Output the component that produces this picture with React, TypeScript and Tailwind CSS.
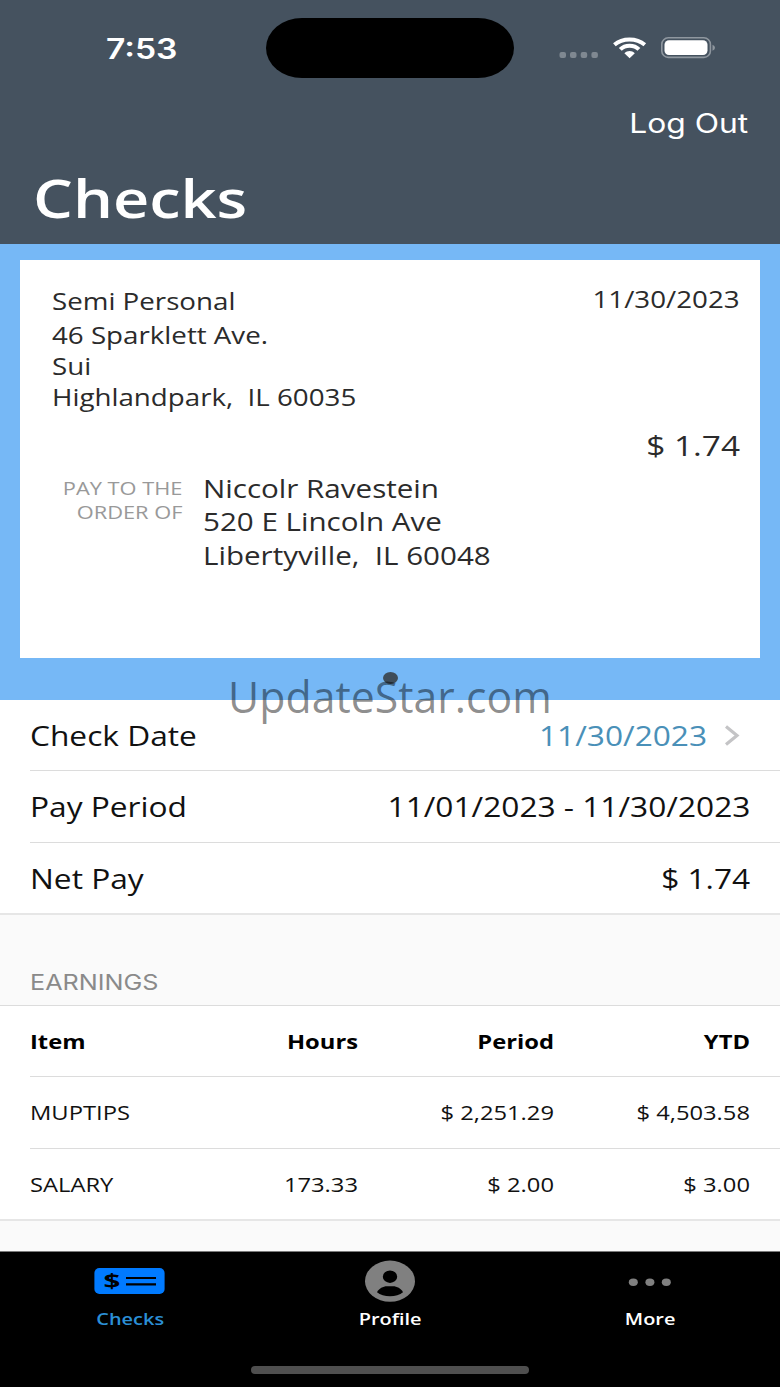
import type { ReactNode } from 'react';

type StretchProps = {
  children: ReactNode;
  className?: string;
};

// Wide lettering, used for every label on the screen.
function Left({ children, className = '' }: StretchProps) {
  return (
    <span className={`block origin-left scale-x-[1.2] whitespace-pre ${className}`}>{children}</span>
  );
}

function Right({ children, className = '' }: StretchProps) {
  return (
    <span className={`block origin-right scale-x-[1.2] whitespace-pre text-right ${className}`}>
      {children}
    </span>
  );
}

function StatusIcons() {
  return (
    <svg width="160" height="24" viewBox="558 36 160 24" className="block">
      <g fill="#7f8891">
        <rect x="559.5" y="52" width="6.5" height="6" rx="2" />
        <rect x="570" y="52" width="6.5" height="6" rx="2" />
        <rect x="580.7" y="52" width="6.5" height="6" rx="2" />
        <rect x="591.4" y="52" width="6.5" height="6" rx="2" />
      </g>
      <g fill="none" stroke="#fff" strokeWidth="4">
        <path d="M614.4 44.8C622.5 37.8 636.5 37.8 644.8 44.8" />
        <path d="M620.3 49.4C625 44.4 634.2 44.4 638.9 49.4" />
      </g>
      <path d="M624.4 53.3C627.4 50.1 631.8 50.1 634.8 53.3L629.6 58.2Z" fill="#fff" />
      <rect x="661.8" y="37.8" width="48.6" height="19.6" rx="6.5" fill="none" stroke="#8f979f" strokeWidth="1.6" />
      <rect x="664.5" y="40.3" width="43" height="14.8" rx="4.5" fill="#fff" />
      <path d="M712.5 44.8Q715 45.8 715 47.8T712.5 50.8Z" fill="#8f979f" />
    </svg>
  );
}

function Header() {
  return (
    <header className="h-[244px] bg-[#45525f] text-white">
      <div className="flex h-24 items-center">
        <div className="w-[266px] pt-[2px] pl-[106px] font-['Inter'] text-[28px] leading-none font-semibold">
          <Left>7:53</Left>
        </div>
        <div className="h-[60px] w-[248px] rounded-[36px/30px] bg-black" />
        <div className="ml-11">
          <StatusIcons />
        </div>
      </div>
      <div className="flex h-[54px] items-center justify-end pt-[2px] pr-8 font-['Inter'] text-[26.5px]">
        <Right>Log Out</Right>
      </div>
      <h1 className="flex h-24 items-center pl-[33px] text-[52.5px] font-semibold">
        <Left>Checks</Left>
      </h1>
    </header>
  );
}

function CheckCard() {
  return (
    <section className="h-[456px] bg-[#76b8f6] px-5 pt-4 text-[#2b2b2b]">
      <div className="h-[397.5px] bg-white pt-6 pr-5 pl-8">
        <div className="flex justify-between text-[23.1px]">
          <div>
            <Left className="leading-[34px]">Semi Personal</Left>
            <Left className="leading-[34px]">46 Sparklett Ave.</Left>
            <Left className="leading-[29px]">Sui</Left>
            <Left className="leading-[32px]">Highlandpark,  IL 60035</Left>
          </div>
          <Right className="leading-[30px]">11/30/2023</Right>
        </div>
        <Right className="mt-4 text-[27.8px] leading-8">$ 1.74</Right>
        <div className="mt-[11px] flex">
          <div className="w-[130.5px] pt-1 text-[18.2px] leading-6 text-[#999]">
            <Right>PAY TO THE</Right>
            <Right>ORDER OF</Right>
          </div>
          <div className="ml-5 text-[24.65px]">
            <Left className="leading-[33px]">Niccolr Ravestein</Left>
            <Left className="leading-[34px]">520 E Lincoln Ave</Left>
            <Left className="leading-[33px]">Libertyville,  IL 60048</Left>
          </div>
        </div>
      </div>
      <div className="mx-auto mt-[14.5px] h-3 w-[15px] rounded-[50%] bg-[#3f4d5a]" />
    </section>
  );
}

function Summary() {
  return (
    <section className="border-b-2 border-[#e6e6e6] bg-white pl-[30px] text-[26.4px] text-[#111]">
      <div className="flex h-[71px] items-center justify-between border-b border-[#dcdcdc] pt-[3px] pr-10">
        <Left>Check Date</Left>
        <div className="flex items-center text-[#4a90b8]">
          <Right>11/30/2023</Right>
          <svg width="16" height="22" viewBox="0 0 16 22" className="ml-[17px]">
            <path d="M2 1.5L13 10.5L2 19.5" fill="none" stroke="#c4c4c6" strokeWidth="3.2" />
          </svg>
        </div>
      </div>
      <div className="flex h-[72px] items-center justify-between border-b border-[#dcdcdc] pt-[2px] pr-[30px]">
        <Left>Pay Period</Left>
        <Right>11/01/2023 - 11/30/2023</Right>
      </div>
      <div className="flex h-[70px] items-center justify-between pt-[3px] pr-[30px]">
        <Left>Net Pay</Left>
        <Right>$ 1.74</Right>
      </div>
    </section>
  );
}

const earnings = [
  { item: 'MUPTIPS', hours: '', period: '$ 2,251.29', ytd: '$ 4,503.58' },
  { item: 'SALARY', hours: '173.33', period: '$ 2.00', ytd: '$ 3.00' },
];

const rowClass = 'grid grid-cols-[132px_196px_196px_196px] items-center';

function Earnings() {
  return (
    <section>
      <h2 className="flex h-[91px] items-end border-b border-[#dcdcdc] pb-[7px] pl-[30px] font-['Inter'] text-[21px] text-[#8a8a8a]">
        <Left>EARNINGS</Left>
      </h2>
      <div className="border-b-2 border-[#e6e6e6] bg-white pl-[30px] text-[19.8px] text-[#111]">
        <div className={`${rowClass} h-[71px] border-b border-[#dcdcdc] pt-px font-bold text-black`}>
          <Left>Item</Left>
          <Right>Hours</Right>
          <Right>Period</Right>
          <Right>YTD</Right>
        </div>
        {earnings.map((row, i) => (
          <div
            key={row.item}
            className={`${rowClass} ${i === 0 ? 'h-[72px] border-b border-[#dcdcdc]' : 'h-[70px] pt-px'}`}
          >
            <Left>{row.item}</Left>
            <Right>{row.hours}</Right>
            <Right>{row.period}</Right>
            <Right>{row.ytd}</Right>
          </div>
        ))}
      </div>
    </section>
  );
}

function TabBar() {
  return (
    <nav className="h-[136px] border-t border-[#7a7a7a] bg-black text-[16.6px] font-semibold text-white">
      <div className="grid h-[84px] grid-cols-3">
        <div className="flex flex-col items-center">
          <svg width="72" height="44" viewBox="94 1260 72 44" className="mt-2">
            <rect x="94.4" y="1268" width="70.2" height="26" rx="5" fill="#007aff" />
            <text
              transform="translate(112 1287.8) scale(1.55 1)"
              textAnchor="middle"
              fontSize="19"
              fontWeight="700"
              fill="#000"
            >
              $
            </text>
            <path d="M126 1278H156M126 1284.4H156" stroke="#000" strokeWidth="2.2" />
          </svg>
          <span className="mt-[6px] block scale-x-[1.2] leading-[18px] text-[#2b8fd6]">Checks</span>
        </div>
        <div className="flex flex-col items-center">
          <svg width="50" height="42" viewBox="365 1260 50 42" className="mt-2">
            <ellipse cx="390" cy="1281.2" rx="25" ry="20.6" fill="#808080" />
            <ellipse cx="390" cy="1276.7" rx="7.2" ry="6.2" fill="#000" />
            <path
              d="M377 1292.2C379 1288.5 383 1286.3 387 1286.3H393C397 1286.3 401 1288.5 403 1292.2C397 1297.6 383 1297.6 377 1292.2Z"
              fill="#000"
            />
          </svg>
          <span className="mt-2 block scale-x-[1.2] leading-[18px]">Profile</span>
        </div>
        <div className="flex flex-col items-center">
          <svg width="50" height="42" viewBox="625 1260 50 42" className="mt-2">
            <g fill="#808080">
              <ellipse cx="633.3" cy="1282.2" rx="4.5" ry="3.7" />
              <ellipse cx="649.9" cy="1282.2" rx="4.5" ry="3.7" />
              <ellipse cx="666.3" cy="1282.2" rx="4.5" ry="3.7" />
            </g>
          </svg>
          <span className="mt-2 block scale-x-[1.2] leading-[18px]">More</span>
        </div>
      </div>
      <div className="mx-auto mt-[30px] h-2 w-[278px] rounded-full bg-[#4f4f4f]" />
    </nav>
  );
}

export default function App() {
  return (
    <div className="relative flex h-[1387px] w-[780px] flex-col overflow-hidden bg-[#fafafa] font-['Open_Sans',sans-serif]">
      <Header />
      <CheckCard />
      <Summary />
      <Earnings />
      <div className="flex-1" />
      <TabBar />
      <div className="pointer-events-none absolute inset-x-0 top-[666px] scale-x-[0.973] text-center text-[44px] leading-[60px] text-black/45">
        UpdateStar.com
      </div>
    </div>
  );
}
